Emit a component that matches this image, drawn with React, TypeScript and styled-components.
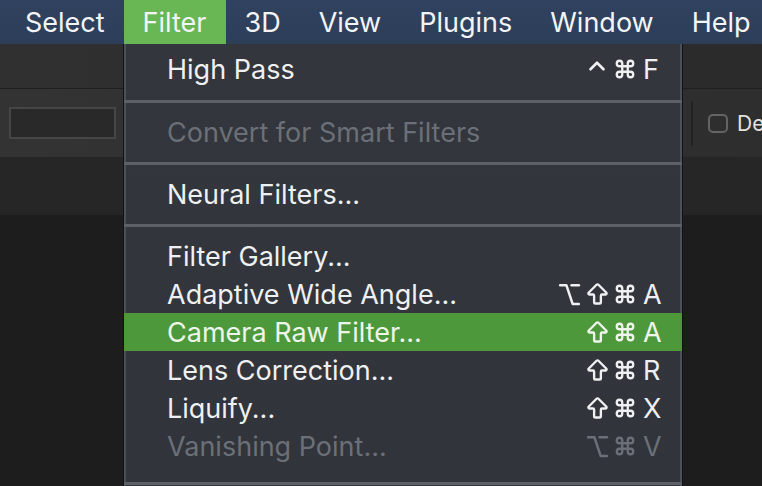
import styled, { createGlobalStyle } from "styled-components";
import { ArrowBigUp, ChevronUp, Command, Option } from "lucide-react";

const GlobalStyle = createGlobalStyle`
  html, body {
    margin: 0;
    padding: 0;
    background: #1d1d1d;
    overflow: hidden;
  }
  * {
    box-sizing: border-box;
  }
`;

const Screen = styled.div`
  position: relative;
  width: 762px;
  height: 486px;
  overflow: hidden;
  font-family: Inter, "Open Sans", sans-serif;
  background: #1d1d1d;
  display: flex;
  flex-direction: column;
`;

const MenuBar = styled.div`
  height: 44px;
  flex-shrink: 0;
  display: flex;
  align-items: stretch;
  padding-left: 6px;
  background: linear-gradient(180deg, #30425f 0%, #2d3e59 100%);
`;

const MenuTitle = styled.div<{ $active?: boolean }>`
  display: flex;
  align-items: center;
  padding: 0 19px;
  font-size: 27px;
  color: #f3f4f6;
  white-space: nowrap;
  background: ${props => props.$active ? "#69b655" : "transparent"};
`;

const ToolBar = styled.div`
  height: 45px;
  flex-shrink: 0;
  background: linear-gradient(90deg, #303030 0%, #2b2b2b 100%);
  border-bottom: 1px solid #1f1f1f;
`;

const OptionsBar = styled.div`
  height: 68px;
  flex-shrink: 0;
  display: flex;
  align-items: center;
  padding-left: 9px;
  background: linear-gradient(90deg, #333333 0%, #2e2e2e 100%);
`;

const TextBox = styled.div`
  width: 107px;
  height: 32px;
  flex-shrink: 0;
  border: 2px solid #464646;
  background: #292929;
`;

const Divider = styled.div`
  width: 2px;
  height: 45px;
  flex-shrink: 0;
  margin-left: 575px;
  background: #222222;
`;

const CheckBox = styled.div`
  width: 20px;
  height: 19px;
  flex-shrink: 0;
  margin-left: 15px;
  border: 2px solid #646464;
  border-radius: 5px;
`;

const CheckLabel = styled.span`
  margin-left: 9px;
  font-size: 21px;
  color: #e2e2e2;
  white-space: nowrap;
`;

const PanelStrip = styled.div`
  height: 58px;
  flex-shrink: 0;
  background: #262626;
`;

const Canvas = styled.div`
  flex: 1;
  background: #1d1d1d;
`;

const Dropdown = styled.div`
  position: absolute;
  left: 123px;
  top: 44px;
  width: 560px;
  height: 460px;
  background: linear-gradient(180deg, #33363c 0%, #31343a 100%);
  border-left: 1px solid #111214;
  border-right: 1px solid #111214;
  box-shadow: inset 2px 0 0 #4c5057, inset -2px 0 0 #4c5057;
`;

const Group = styled.div<{ $pad: string }>`
  padding: ${props => props.$pad};
`;

const Separator = styled.div`
  height: 3px;
  background: #5c6067;
`;

const Row = styled.div<{ $highlight?: boolean, $disabled?: boolean }>`
  height: 38px;
  display: flex;
  align-items: center;
  padding: 0 17px 0 43px;
  font-size: 27px;
  color: ${props => props.$disabled ? "#6b7078" : props.$highlight ? "#eef5ea" : "#eef0f2"};
  background: ${props => props.$highlight ? "#4e983c" : "transparent"};
`;

const Label = styled.span`
  flex: 1;
  white-space: nowrap;
`;

const Shortcut = styled.span`
  display: flex;
  align-items: center;
`;

const Mod = styled.span`
  width: 28px;
  height: 38px;
  display: flex;
  align-items: center;
  justify-content: center;
`;

const Key = styled.span`
  width: 22px;
  margin-left: 4px;
  font-size: 27px;
`;

type ModName = "ctrl" | "opt" | "shift" | "cmd";

const ModIcon = ({ name }: { name: ModName }) => {
  if (name === "ctrl") return <ChevronUp size={26} strokeWidth={2.4} style={{ marginTop: -6 }} />;
  if (name === "opt") return <Option size={25} strokeWidth={2.4} />;
  if (name === "shift") return <ArrowBigUp size={27} strokeWidth={2.1} />;
  return <Command size={22} strokeWidth={2.5} />;
};

type Item = {
  label: string;
  mods?: ModName[];
  key?: string;
  disabled?: boolean;
  highlight?: boolean;
};

const groups: { pad: string, items: Item[] }[] = [
  { pad: "6px 0 12px", items: [{ label: "High Pass", mods: ["ctrl", "cmd"], key: "F" }] },
  { pad: "10px 0 11px", items: [{ label: "Convert for Smart Filters", disabled: true }] },
  { pad: "10px 0 11px", items: [{ label: "Neural Filters..." }] },
  {
    pad: "10px 0 17px",
    items: [
      { label: "Filter Gallery..." },
      { label: "Adaptive Wide Angle...", mods: ["opt", "shift", "cmd"], key: "A" },
      { label: "Camera Raw Filter...", mods: ["shift", "cmd"], key: "A", highlight: true },
      { label: "Lens Correction...", mods: ["shift", "cmd"], key: "R" },
      { label: "Liquify...", mods: ["shift", "cmd"], key: "X" },
      { label: "Vanishing Point...", mods: ["opt", "cmd"], key: "V", disabled: true },
    ],
  },
  { pad: "10px 0", items: [] },
];

const menuTitles = ["Select", "Filter", "3D", "View", "Plugins", "Window", "Help"];

const App = () => {
  return (
    <>
      <GlobalStyle />
      <Screen>
        <MenuBar>
          {menuTitles.map(title => (
            <MenuTitle key={title} $active={title === "Filter"}>{title}</MenuTitle>
          ))}
        </MenuBar>
        <ToolBar />
        <OptionsBar>
          <TextBox />
          <Divider />
          <CheckBox />
          <CheckLabel>Delete Cropped Pixels</CheckLabel>
        </OptionsBar>
        <PanelStrip />
        <Canvas />

        <Dropdown>
          {groups.map((group, gi) => (
            <div key={gi}>
              {gi > 0 && <Separator />}
              <Group $pad={group.pad}>
                {group.items.map(item => (
                  <Row key={item.label} $highlight={item.highlight} $disabled={item.disabled}>
                    <Label>{item.label}</Label>
                    {item.key && (
                      <Shortcut>
                        {item.mods?.map((m, i) => <Mod key={i}><ModIcon name={m} /></Mod>)}
                        <Key>{item.key}</Key>
                      </Shortcut>
                    )}
                  </Row>
                ))}
              </Group>
            </div>
          ))}
        </Dropdown>
      </Screen>
    </>
  );
};

export default App;
